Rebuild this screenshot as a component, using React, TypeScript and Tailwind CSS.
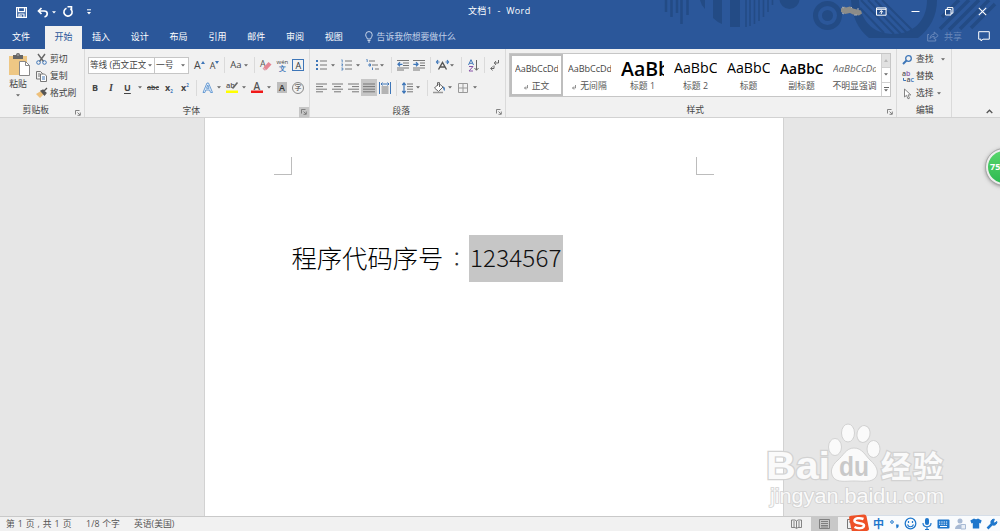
import type { ReactNode } from "react";

type SvgProps = { w: number; h: number; className?: string; children: ReactNode };

const Svg = ({ w, h, className = "", children }: SvgProps) => (
  <svg
    width={w}
    height={h}
    viewBox={`0 0 ${w} ${h}`}
    fill="none"
    className={`shrink-0 overflow-visible ${className}`}
  >
    {children}
  </svg>
);

const Caret = ({ className = "" }: { className?: string }) => (
  <Svg w={4} h={3} className={className}>
    <path d="M0 .3h4L2 2.6z" fill="#666" />
  </Svg>
);

const Sep = ({ className = "" }: { className?: string }) => (
  <div className={`w-px h-4 shrink-0 bg-[#dadada] ${className}`} />
);

const Launcher = () => (
  <Svg w={6} h={6}>
    <path d="M.5 4.5v-4h4M2.5 2.5l2.5 2.5M5.3 2.5v2.8H2.5" stroke="#777" strokeWidth=".9" />
  </Svg>
);

// horizontal text lines, each one given as [x1, x2]
const Lines = ({ rows, className = "" }: { rows: number[][]; className?: string }) => (
  <Svg w={12} h={12} className={className}>
    {rows.map(([a, b], i) => (
      <path key={i} d={`M${a} ${2 + i * 2.6}H${b}`} stroke="#777" strokeWidth="1" />
    ))}
  </Svg>
);

const tabs = ["插入", "设计", "布局", "引用", "邮件", "审阅", "视图"];

const Decoration = () => (
  <svg
    className="absolute right-0 top-0"
    width="360"
    height="49"
    viewBox="0 0 360 49"
    fill="none"
    stroke="#234b85"
  >
    <path d="M26 0v12M31.500 0v17M37 0v13M41.500 0v24M47.500 0v15" strokeWidth="2.500" />
    <path d="M60 0h5v9q-4-4-5-9zM73 0h9v24q-5-2-9-6zM90 0h10v27H90z" fill="#234b85" stroke="none" />
    <path d="M106 0v27M110 0v26M114.500 0v24M119 0v21M123.500 0v17M128 0v12M132.500 0v5" strokeWidth="1.600" />
    <circle cx="149.500" cy="-1" r="10" fill="#234b85" stroke="none" />
    <circle cx="187.500" cy="15.500" r="12" strokeWidth="5" />
    <circle cx="187.500" cy="15.500" r="5.500" fill="#234b85" stroke="none" />
    <path d="M211 0c1 17 7 29 18 38h49c12-9 19-22 19-38h-10c0 21-14 34-34 34S220 20 219 0z" fill="#234b85" stroke="none" />
    <path d="M221 0l33 34M228 0l33 34M235 0l32 33M242 0l31 31M220 8l24 25" strokeWidth="2" />
    <path d="M300 29L329 0M309 30L339 0M320 29L349 0M302 17L319 0M331 28l24-24" strokeWidth="3.500" />
  </svg>
);

const TitleBar = () => (
  <div className="relative flex h-[24px] items-center text-white">
    <Svg w={11} h={11} className="ml-[16px]">
      <path d="M.6.600h9.800v9.800H.6zM2.500.600v4h6V.6M3 10.400V7h5v3.400M5 8v2" stroke="#fff" strokeWidth="1.200" />
    </Svg>
    <Svg w={12} h={11} className="ml-[10px]">
      <path d="M4.500 1L1.500 4l3 3M1.500 4h5.700c4 0 4 5 .3 6" stroke="#fff" strokeWidth="1.700" />
    </Svg>
    <Svg w={4} h={3} className="ml-[3px]">
      <path d="M0 .3h4L2 2.600z" fill="#fff" />
    </Svg>
    <Svg w={12} h={12} className="ml-[6px]">
      <path d="M4.500 2.200A4.100 4.100 0 1 0 8.300 2.600M5.500.800h4v4" stroke="#fff" strokeWidth="1.600" />
    </Svg>
    <Svg w={6} h={6} className="ml-[12px]">
      <path d="M1 .8h4" stroke="#fff" />
      <path d="M1 3h4L3 5.500z" fill="#fff" />
    </Svg>
    <span className="ml-[376px] w-[66px] text-[9px] leading-none tracking-[.35px] whitespace-pre pb-[4px]">
      文档1  -  Word
    </span>
    <Svg w={22} h={11} className="ml-[306px] mb-[2px]">
      <path d="M1 2.500l3-2 2 1 4-1 3 2 4 1 4 1 1 3-3 2-6-1-3-1.500-5 1-4-2z" fill="#8d8c88" />
      <path d="M2 1l2 1M11 1l1 1M2 7l2 1M17 3h2M14 9h3" stroke="#a8aeb8" />
    </Svg>
    <Svg w={11} h={9} className="ml-[14px] mb-[2px]">
      <path d="M.5.900h9.600v7.300H.5zM.5 2.300h9.600M5.300 7V3.800M3.500 5.300l1.800-1.700 1.800 1.700" stroke="#fff" />
    </Svg>
    <Svg w={9} h={9} className="ml-[24px] mb-[2px]">
      <path d="M.5 4.500h8" stroke="#fff" />
    </Svg>
    <Svg w={9} h={9} className="ml-[25px] mb-[2px]">
      <path d="M.5 2.500h5.500v5.500H.5zM2.300 2.300V.6h5.600v5.600H6" stroke="#fff" />
    </Svg>
    <Svg w={9} h={9} className="ml-[24px] mb-[2px]">
      <path d="M.8.800l7.400 7.400M8.200.800L.8 8.200" stroke="#fff" strokeWidth="1.100" />
    </Svg>
  </div>
);

const TabBar = () => (
  <div className="relative flex h-[25px] pt-[2px] text-[9px] leading-none text-white">
    <div className="flex w-[45px] items-center pb-[3px] pl-[12px]">文件</div>
    <div className="flex w-[37px] items-center justify-center bg-[#f1f1f1] pb-[3px] text-[#2b579a]">开始</div>
    <div className="flex pb-[3px] pl-[10px]">
      {tabs.map((tab) => (
        <div key={tab} className="flex w-[38.8px] items-center">
          {tab}
        </div>
      ))}
    </div>
    <div className="flex items-center pb-[1px] text-[8.8px] text-[#c3d1e8]">
      <Svg w={8} h={12} className="mr-[4px] ml-[1px]">
        <path d="M2.300 8C2.300 6.500.7 6 .7 3.800a3.200 3.200 0 0 1 6.500 0C7.200 6 5.700 6.500 5.700 8zM2.500 9.500h3M3 11h2" stroke="#d9e2f0" strokeWidth=".9" />
      </Svg>
      告诉我你想要做什么
    </div>
    <div className="ml-auto flex items-center pr-[10px] pb-[2px] text-[#6a89bb]">
      <Svg w={12} h={11} className="mr-[5px]">
        <path d="M2 3.500H.7v6.500h8V8M3 7.500c.3-3 2-4.200 4.200-4.200V1l4 3.600-4 3.400V5.500C5.500 5.500 4 6 3 7.500z" stroke="#6a89bb" />
      </Svg>
      共享
      <Svg w={12} h={11} className="ml-[16px]">
        <path d="M.7.700h10.600v7.500H5L3 10V8.200H.7z" stroke="#fff" />
      </Svg>
    </div>
  </div>
);

const Clipboard = () => (
  <section className="flex w-[85px] flex-col border-r border-[#dadada]">
    <div className="flex h-[53px]">
      <div className="flex w-[36px] flex-col items-center pt-[4px]">
        <Svg w={22} h={23} className="ml-[3px]">
          <path d="M0 3h18v19H0z" fill="#eec784" />
          <path d="M4 2h3a2 2 0 0 1 4 0h3v4H4z" fill="#666" />
          <path d="M8.500 2h1" stroke="#fff" />
          <path d="M10.500 8.500h6l4 4v10h-10z" fill="#fff" stroke="#888" />
          <path d="M16.500 8.500v4h4" stroke="#888" />
        </Svg>
        <span className="mt-[4px]">粘贴</span>
        <Caret className="mt-[5px]" />
      </div>
      <div className="flex flex-col pt-[2px]">
        <div className="flex h-[17px] shrink-0 items-center">
          <Svg w={11} h={11} className="mr-[3px]">
            <path d="M2 0l5.500 7.500M9 0L3.500 7.500" stroke="#666" strokeWidth="1.400" />
            <circle cx="2.500" cy="8.500" r="1.800" stroke="#3e76b8" />
            <circle cx="8.500" cy="8.500" r="1.800" stroke="#3e76b8" />
          </Svg>
          剪切
        </div>
        <div className="flex h-[17px] shrink-0 items-center">
          <Svg w={11} h={11} className="mr-[3px]">
            <path d="M.5.500h4l2 2V8h-6zM2 3h2M2 5h2" stroke="#777" />
            <path d="M4.500 3h4l2 2v5.500h-6z" fill="#fff" stroke="#777" />
            <path d="M6 6h3M6 8h3" stroke="#3e76b8" />
          </Svg>
          复制
        </div>
        <div className="flex h-[17px] shrink-0 items-center">
          <Svg w={12} h={11} className="mr-[2px]">
            <path d="M5 3L0 6l4 4 4-4z" fill="#eec07a" />
            <path d="M5 3l2-1 3 3-1.500 2zM8 3l3-3" fill="#555" stroke="#555" strokeWidth="1.300" />
          </Svg>
          格式刷
        </div>
      </div>
    </div>
    <div className="flex h-[14px] items-center justify-end pr-[3px]">
      <span className="mr-[26px] mt-[3px]">剪贴板</span>
      <div className="mt-[7px]"><Launcher /></div>
    </div>
  </section>
);

const FontGroup = () => (
  <section className="w-[225px] border-r border-[#dadada]">
    <div className="flex h-[22px] items-center pt-[10px] pl-[3px] text-[#444]">
      <div className="flex h-[17px] w-[67px] shrink-0 items-center border border-[#c6c6c6] bg-white pl-px">
        <span className="w-[56px] overflow-hidden whitespace-nowrap text-[8.6px] leading-[14px]">等线 (西文正文</span>
        <Caret className="ml-[2px]" />
      </div>
      <div className="-ml-px flex h-[17px] w-[35px] shrink-0 items-center border border-[#c6c6c6] bg-white pl-px text-[8.8px]">
        <span className="w-[25px]">一号</span>
        <Caret />
      </div>
      <span className="ml-[5px] font-[Open_Sans] text-[10.500px]">A</span>
      <Svg w={4} h={3} className="mb-[6px]"><path d="M2 0l2 3H0z" fill="#3e76b8" /></Svg>
      <span className="ml-[5px] font-[Open_Sans] text-[9px]">A</span>
      <Svg w={4} h={3} className="mb-[6px]"><path d="M0 0h4L2 3z" fill="#3e76b8" /></Svg>
      <Sep className="ml-[5px]" />
      <span className="ml-[5px] w-[15px] font-[Open_Sans] text-[9.5px]">Aa</span>
      <Caret className="-ml-px" />
      <Sep className="ml-[6px]" />
      <Svg w={12} h={12} className="ml-[5px]">
        <text x="0" y="8" fontSize="9" fontFamily="Open Sans" fill="#555">A</text>
        <path d="M3.500 8.500L8.500 3 11.500 5.500 6.500 11z" fill="#e58594" />
        <path d="M3.500 8.500L6.500 11l-2 .5-2-1.700z" fill="#d9a4ad" />
      </Svg>
      <div className="ml-[4px] w-[12px] shrink-0 font-[Open_Sans]">
        <div className="text-center text-[6px] leading-[6px]">wén</div>
        <div className="text-center text-[7px] leading-[7px] font-bold text-[#3e76b8]">文</div>
      </div>
      <div className="ml-[4px] flex h-[12px] w-[12px] items-center justify-center border border-[#3e76b8] font-[Open_Sans] text-[9px] text-[#333]">A</div>
    </div>
    <div className="mt-[8px] flex h-[17px] items-center pl-[7px] text-[#444]">
      <b className="w-[17px] font-[Open_Sans] text-[9px]">B</b>
      <i className="w-[15px] font-[Liberation_Serif] text-[10px] font-bold">I</i>
      <span className="w-[14px] font-[Open_Sans] text-[9px] font-bold underline underline-offset-2">U</span>
      <Caret />
      <span className="ml-[5px] w-[18px] font-[Open_Sans] text-[7px] font-semibold line-through">abc</span>
      <span className="w-[16px] font-[Open_Sans] text-[9px] font-bold">x<span className="relative top-[2px] text-[4.500px] text-[#3e76b8]">2</span></span>
      <span className="w-[14px] font-[Open_Sans] text-[9px] font-bold">x<span className="relative -top-[4px] text-[4.500px] text-[#3e76b8]">2</span></span>
      <Sep className="ml-px" />
      <Svg w={12} h={12} className="ml-[5px]">
        <path d="M1 10.500L5 1h1.500l4 9.500H8.600L7.600 8H3.800l-.9 2.500zM4.500 6.300h2.600L5.800 3z" stroke="#5b93d0" strokeWidth=".9" fill="#eaf2fa" />
      </Svg>
      <Caret className="ml-[3px]" />
      <Svg w={13} h={13} className="ml-[5px]">
        <text x="0" y="7" fontSize="7.500" fontWeight="600" fontFamily="Open Sans" fill="#555">ab</text>
        <path d="M6.500 7.500l5-6" stroke="#666" strokeWidth="1.600" />
        <path d="M0 9.500h12v2.500H0z" fill="#ff0" />
      </Svg>
      <Caret className="ml-[3px]" />
      <Svg w={13} h={13} className="ml-[5px]">
        <text x="2.500" y="8.500" fontSize="10" fontWeight="600" fontFamily="Open Sans" fill="#555">A</text>
        <path d="M0 9.500h12v2.500H0z" fill="#f01818" />
      </Svg>
      <Caret className="ml-[3px]" />
      <span className="ml-[6px] flex h-[11px] w-[10px] items-center justify-center bg-[#bdbdbd] font-[Open_Sans] text-[9px] font-semibold text-[#333]">A</span>
      <span className="ml-[5px] flex h-[12px] w-[12px] items-center justify-center rounded-full border border-[#888] text-[7px]">字</span>
    </div>
    <div className="flex h-[20px] items-center justify-end">
      <span className="mr-[99px] mt-[10px]">字体</span>
      <div className="mt-[12px] flex h-[11px] w-[10px] items-center justify-center bg-[#c6c6c6]"><Launcher /></div>
    </div>
  </section>
);

const Paragraph = () => (
  <section className="w-[196px] border-r border-[#dadada]">
    <div className="flex h-[22px] items-center pt-[10px] pl-[6px]">
      <Svg w={11} h={12}>
        <path d="M4 2h7M4 6h7M4 10h7" stroke="#777" />
        <path d="M0 1h2v2H0zM0 5h2v2H0zM0 9h2v2H0z" fill="#3e76b8" />
      </Svg>
      <Caret className="ml-[4px]" />
      <Svg w={11} h={12} className="ml-[6px]">
        <path d="M4 2h7M4 6h7M4 10h7" stroke="#777" />
        <path d="M.5.800h.7V3.500M.3 5h1.500l-1 2h1M.3 9h1.500v2H.3" stroke="#3e76b8" strokeWidth=".8" />
      </Svg>
      <Caret className="ml-[4px]" />
      <Svg w={13} h={12} className="ml-[6px]">
        <path d="M3 2h6M6 6h6M9 10h4" stroke="#777" />
        <path d="M.5.500h.7V3M3 5h1.500v2H3zM6.500 8.500V11" stroke="#3e76b8" strokeWidth=".9" />
      </Svg>
      <Caret className="ml-px" />
      <Sep className="ml-[7px]" />
      <Svg w={12} h={12} className="ml-[5px]">
        <path d="M0 1.500h12M6 4h6M6 6.500h6M0 9h12M0 11h7" stroke="#777" />
        <path d="M5.500 5.300H1M3 3.300l-2 2 2 2" stroke="#3e76b8" strokeWidth="1.300" />
      </Svg>
      <Svg w={12} h={12} className="ml-[4px]">
        <path d="M0 1.500h12M7 4h5M7 6.500h5M0 9h12M0 11h7" stroke="#777" />
        <path d="M.3 5.300H5M3 3.300l2 2-2 2" stroke="#3e76b8" strokeWidth="1.300" />
      </Svg>
      <Sep className="ml-[5px]" />
      <Svg w={13} h={12} className="ml-[5px]">
        <path d="M2.500 10.500l4-7 4 7M4 8h5" stroke="#555" strokeWidth="1.400" />
        <path d="M.5 3h3M2 1L.5 3 2 5M12.500 3h-3M11 1l1.500 2L11 5" stroke="#3e76b8" strokeWidth="1.200" />
      </Svg>
      <Caret className="ml-px" />
      <Sep className="ml-[7px]" />
      <Svg w={11} h={13} className="ml-[6px]">
        <path d="M.5 6L3 .7 5.500 6M1.500 4.300h3" stroke="#3e76b8" />
        <path d="M1 7.500h4l-4 4.500h4" stroke="#8955a8" />
        <path d="M8.500 1v10M6.500 9l2 2.300 2-2.300" stroke="#666" />
      </Svg>
      <Sep className="ml-[5px]" />
      <Svg w={10} h={12} className="ml-[5px]">
        <path d="M8.500 1v3h-4M6 2L4.300 4 6 6M4 6.500v3H.8M2.500 7.500L.8 9.500l1.700 2" stroke="#555" strokeWidth=".9" />
      </Svg>
    </div>
    <div className="mt-[8px] flex h-[17px] items-center pl-[6px]">
      <Lines rows={[[0, 11], [0, 7], [0, 11], [0, 7]]} />
      <Lines rows={[[0, 11], [2, 9], [0, 11], [2, 9]]} className="ml-[4px]" />
      <Lines rows={[[0, 11], [4, 11], [0, 11], [4, 11]]} className="ml-[4px]" />
      <div className="ml-px flex h-[17px] w-[16px] items-center justify-center bg-[#c6c6c6]">
        <Lines rows={[[0, 12], [0, 12], [0, 12], [0, 12]]} />
      </div>
      <Svg w={12} h={12} className="ml-[2px]">
        <path d="M.5 0v12M11.500 0v12M2 2h8M3.500.500L2 2l1.500 1.500M8.500.500L10 2 8.500 3.500" stroke="#3e76b8" />
        <path d="M2.500 5h7M2.500 7h7M2.500 9h7M2.500 11h7" stroke="#777" />
      </Svg>
      <Sep className="ml-[5px]" />
      <Svg w={11} h={12} className="ml-[5px]">
        <path d="M2 1v10M.3 3L2 1l1.700 2M.3 9L2 11l1.700-2" stroke="#3e76b8" strokeWidth="1.200" />
        <path d="M5 2h6M5 4.600h6M5 7.200h6M5 9.800h6" stroke="#777" />
      </Svg>
      <Caret className="ml-[3px]" />
      <Sep className="ml-[7px]" />
      <Svg w={13} h={12} className="ml-[5px]">
        <path d="M1.500 6L6 1.500l4 3.500-4.500 4.500zM4.500 4V.6h2V5" stroke="#666" fill="#fff" />
        <path d="M10 4.500c2.500.500 2 3 1.500 4.500C10.500 8 10 7 10 4.500z" fill="#3e76b8" />
        <path d="M0 10.500h10" stroke="#999" strokeWidth="1.500" />
      </Svg>
      <Caret className="ml-[2px]" />
      <Svg w={10} h={10} className="ml-[6px]">
        <path d="M.5.500h9v9h-9zM5 .5v9M.5 5h9" stroke="#999" />
      </Svg>
      <Caret className="ml-[5px]" />
    </div>
    <div className="flex h-[20px] items-center justify-end pr-[3px]">
      <span className="mr-[86px] mt-[10px]">段落</span>
      <div className="mt-[12px]"><Launcher /></div>
    </div>
  </section>
);

const styles = [
  { sample: "AaBbCcDd", name: "正文", mark: true, cls: "text-[9.1px] tracking-[-.05px]" },
  { sample: "AaBbCcDd", name: "无间隔", mark: true, cls: "text-[9.1px] tracking-[-.05px]" },
  { sample: "AaBbC", name: "标题 1", mark: false, cls: "text-[19.5px] font-semibold text-black" },
  { sample: "AaBbCc", name: "标题 2", mark: false, cls: "text-[14.2px] text-black" },
  { sample: "AaBbCc", name: "标题", mark: false, cls: "text-[14.2px] text-black" },
  { sample: "AaBbCc", name: "副标题", mark: false, cls: "text-[13.8px] font-semibold text-black" },
  { sample: "AaBbCcDd", name: "不明显强调", mark: false, cls: "text-[9.8px] italic text-[#666]" },
];

const Styles = () => (
  <section className="flex w-[391px] flex-col border-r border-[#dadada] pt-[4px] pl-[3px]">
    <div className="flex h-[44px] w-[382px] border border-[#c6c6c6] bg-white">
      {styles.map((style, index) => (
        <div
          key={index}
          className={`flex w-[53px] shrink-0 flex-col items-center ${
            index === 0 ? "outline-2 -outline-offset-2 outline-[#bebebe]" : ""
          }`}
        >
          <div className="mt-[4px] flex h-[21px] w-[43px] items-center overflow-hidden">
            <span className={`font-[Open_Sans] leading-none ${style.cls}`}>{style.sample}</span>
          </div>
          <div className="mt-[3px] flex items-center gap-[4px] text-[8.8px] whitespace-nowrap text-[#555]">
            {style.mark && (
              <Svg w={4} h={5} className="mt-[2px]">
                <path d="M3.500 0v3H.5M2 1.500L.5 3 2 4.500" stroke="#777" strokeWidth=".8" />
              </Svg>
            )}
            {style.name}
          </div>
        </div>
      ))}
      <div className="ml-auto flex w-[10px] flex-col border-l border-[#d0d0d0]">
        <div className="flex flex-1 items-center justify-center bg-[#e1e1e1]">
          <Svg w={4} h={3}><path d="M2 0l2 3H0z" fill="#bbb" /></Svg>
        </div>
        <div className="flex flex-1 items-center justify-center border-y border-[#d0d0d0]">
          <Caret />
        </div>
        <div className="flex flex-1 flex-col items-center justify-center gap-px">
          <div className="h-px w-[5px] bg-[#666]" />
          <Caret />
        </div>
      </div>
    </div>
    <div className="flex h-[19px] items-center justify-end pr-[3px]">
      <span className="mr-[183px] mt-[8px]">样式</span>
      <div className="mt-[11px]"><Launcher /></div>
    </div>
  </section>
);

const Editing = () => (
  <section className="flex w-[55px] flex-col border-r border-[#dadada] pt-[2px] pl-[5px]">
    <div className="flex h-[17px] items-center">
      <Svg w={11} h={10} className="mr-[3px]">
        <circle cx="6.500" cy="3.500" r="2.800" stroke="#3e76b8" strokeWidth="1.300" />
        <path d="M4.500 5.500L1 9" stroke="#3e76b8" strokeWidth="1.900" />
      </Svg>
      查找
      <Caret className="ml-[7px]" />
    </div>
    <div className="flex h-[17px] items-center">
      <div className="mr-[2px] flex w-[12px] flex-col font-[Open_Sans] text-[7px] leading-[6px] font-semibold text-[#555]">
        <span>a<span className="text-[#8955a8]">b</span></span>
        <span className="flex items-center justify-end">
          <Svg w={3} h={4}><path d="M.5 0v2.500H3" stroke="#3e76b8" /></Svg>
          a<span className="text-[#3e76b8]">c</span>
        </span>
      </div>
      替换
    </div>
    <div className="flex h-[17px] items-center">
      <Svg w={10} h={12} className="mr-[3px] ml-px">
        <path d="M1.500 1v8l2-1.700 1.500 3.500 1.500-.6-1.500-3.300h2.800z" stroke="#777" strokeWidth=".9" fill="#fff" />
      </Svg>
      选择
      <Caret className="ml-[3px]" />
    </div>
    <div className="mt-[4px] pl-[14px]">编辑</div>
  </section>
);

const Ribbon = () => (
  <div className="flex h-[69px] shrink-0 border-b border-[#d2d2d2] bg-[#f1f1f1] text-[8.8px] leading-none text-[#444]">
    <Clipboard />
    <FontGroup />
    <Paragraph />
    <Styles />
    <Editing />
    <Svg w={7} h={5} className="ml-[34px] mt-[60px]">
      <path d="M.7 4l2.800-2.800L6.300 4" stroke="#555" strokeWidth="1.300" />
    </Svg>
  </div>
);

const Page = () => (
  <div className="ml-[204px] h-full w-[580px] border-x border-[#d2d2d2] bg-white">
    <div className="flex justify-between pt-[39px] pr-[69px] pl-[69px]">
      <div className="h-[18px] w-[18px] border-r border-b border-[#bcbcbc]" />
      <div className="h-[18px] w-[18px] border-b border-l border-[#bcbcbc]" />
    </div>
    <div className="mt-[60px] flex h-[47px] items-center pl-[86.500px] font-['Noto_Sans_CJK_SC'] text-[25.300px] font-light leading-none text-black">
      <span className="pb-[2px]">程序代码序号</span>
      <span className="w-[25.700px] pl-[1px] text-center font-['Noto_Sans_CJK_TC'] text-[20px] text-[#333]">：</span>
      <span className="flex h-[47px] w-[94px] items-center bg-[#c6c6c6] pb-[2px] pl-px text-[24.200px] tracking-[.15px] text-[#111]">1234567</span>
    </div>
  </div>
);

const Watermark = () => (
  <div className="absolute top-[422px] left-[766px] h-[86px] w-[182px]">
    <svg width="182" height="86" viewBox="0 0 182 86" fill="#fafafa" stroke="#d2d2d2" strokeWidth="1">
      <g fontFamily="Liberation Sans" fontWeight="700" paintOrder="stroke" strokeWidth="2.500">
        <text x="0" y="57" fontSize="38" textLength="64" lengthAdjust="spacingAndGlyphs">Bai</text>
        <text x="115" y="55" fontSize="30" textLength="62" fontFamily="Noto Sans CJK SC">经验</text>
        <text x="4" y="81" fontSize="20" textLength="174" lengthAdjust="spacingAndGlyphs" fontWeight="400" strokeWidth="1.600">jingyan.baidu.com</text>
      </g>
      <ellipse cx="69" cy="25" rx="6.500" ry="8.500" />
      <ellipse cx="82" cy="11" rx="6.500" ry="9" />
      <ellipse cx="97.500" cy="12" rx="6.500" ry="8.500" transform="rotate(12 97.500 12)" />
      <ellipse cx="107.500" cy="27" rx="6.500" ry="8.500" />
      <path d="M88 26c8 0 11 7 16 12 7 6 9 12 6 17-4 6-14 4-22 4s-17 2-21-4c-3-5-2-11 5-17 5-4 8-12 16-12z" />
      <text x="73" y="54" fontSize="27" fontWeight="700" textLength="30" lengthAdjust="spacingAndGlyphs" fontFamily="Liberation Sans" fill="#c9c9c9" stroke="none">du</text>
    </svg>
  </div>
);

const InputBar = () => (
  <div className="absolute right-0 bottom-0 flex h-[16px] w-[147px] items-center border-t border-[#d6dee8] bg-[#f9fbfd] text-[#1f77cc]">
    <Svg w={22} h={18} className="-ml-[5px] -mt-[2px]">
      <path d="M1 3.500Q1 2 3 1.700L16 .5q2 0 2.500 2L21 15q0 1.500-2 2l-13 1q-2 0-2.500-2z" fill="#ee5127" />
      <path d="M15.500 5C12 3.500 6 4 6.500 7s9.500 1.500 9.500 4.500-6 3.500-9.500 1.500" stroke="#fff" strokeWidth="2.500" />
    </Svg>
    <span className="ml-[3px] text-[11px] leading-none font-bold">中</span>
    <Svg w={10} h={10} className="ml-[6px]">
      <circle cx="2" cy="3" r="1.300" stroke="#1f77cc" />
      <path d="M6 5.500h2.500c.5 2 0 3.300-2 4" fill="#1f77cc" />
    </Svg>
    <Svg w={13} h={13} className="ml-[4px]">
      <circle cx="6.500" cy="6.500" r="5.300" stroke="#1f77cc" strokeWidth="1.300" />
      <path d="M4.500 4v2M8.500 4v2M3.500 7.500c1 3 5 3 6 0" stroke="#1f77cc" strokeWidth="1.200" />
    </Svg>
    <Svg w={10} h={12} className="ml-[5px]">
      <rect x="3" y="0" width="4" height="7" rx="2" fill="#1f77cc" />
      <path d="M1 5c0 5 8 5 8 0M5 8.500v3M3 11.500h4" stroke="#1f77cc" strokeWidth="1.200" />
    </Svg>
    <Svg w={13} h={10} className="ml-[5px]">
      <rect x=".5" y=".5" width="12" height="9" rx="1" fill="#1f77cc" />
      <path d="M2 3h9M2 5.200h9" stroke="#fff" strokeDasharray="1.300 1" />
      <path d="M3 7.500h7" stroke="#fff" />
    </Svg>
    <Svg w={11} h={12} className="ml-[5px]">
      <circle cx="5" cy="3" r="2.500" fill="#a8bad4" />
      <path d="M0 11c0-6 10-6 10 0z" fill="#a8bad4" />
      <path d="M6 6.500h4.500V11H6z" fill="#e8eef6" stroke="#a8bad4" />
    </Svg>
    <Svg w={12} h={11} className="ml-[4px]">
      <path d="M4 .5Q6 2 8 .5L11.700 2.500 10.500 5.500 9.200 5v5.500H2.800V5l-1.300.5L.3 2.500z" fill="#1f77cc" />
    </Svg>
    <Svg w={12} h={12} className="ml-[4px]">
      <path d="M1.500 10.500L7 5" stroke="#1f77cc" strokeWidth="2.500" />
      <path d="M10.800 3.500A3 3 0 1 1 8.300 1.200L7.500 4l1.200 1z" fill="#1f77cc" stroke="#1f77cc" />
    </Svg>
  </div>
);

const StatusBar = () => (
  <div className="relative flex h-[15px] shrink-0 items-center border-t border-[#c9c9c9] bg-[#f1f1f1] text-[8.800px] leading-none whitespace-pre text-[#555]">
    <span className="ml-[6px] w-[80px] tracking-[.35px]">第 1 页 , 共 1 页</span>
    <span className="w-[48px] tracking-[.15px]">1/8 个字</span>
    <span className="w-[657px]">英语(美国)</span>
    <Svg w={11} h={10}>
      <path d="M.5 1h3.500l1.500 1L7 1h3.500v7.500H7l-1.500 1L4 8.500H.5zM5.500 2v7M2 3h2M2 5h2M2 7h2M7 3h2M7 5h2M7 7h2" stroke="#777" strokeWidth=".9" />
    </Svg>
    <div className="ml-[9px] flex h-full w-[27px] items-center justify-center bg-[#c8c8c8]">
      <Svg w={11} h={10}>
        <path d="M.5.500h10v9H.5zM2 2.500h7M2 4.500h7M2 6.500h7M2 8h7" stroke="#777" strokeWidth=".9" />
      </Svg>
    </div>
    <Svg w={11} h={10} className="ml-[9px]">
      <path d="M.5.500h10v9H.5zM2 3h7" stroke="#777" />
    </Svg>
    <InputBar />
  </div>
);

const App = () => {
  return (
    <div className="relative flex h-[531px] w-[1000px] flex-col overflow-hidden bg-[#e6e6e6] font-['Open_Sans','Noto_Sans_CJK_SC',sans-serif]">
      <header className="relative h-[49px] shrink-0 bg-[#2b579a]">
        <Decoration />
        <TitleBar />
        <TabBar />
      </header>
      <Ribbon />
      <main className="min-h-0 flex-1">
        <Page />
      </main>
      <StatusBar />
      <Watermark />
      <div className="absolute top-[149px] left-[986px] flex h-[36px] w-[36px] items-center rounded-full border-2 border-[#eee] bg-linear-to-b from-[#58d66c] to-[#2bb951] pl-[2px] text-[9px] font-bold text-white shadow-[0_1px_4px_#777] outline outline-[#aaa]">
        75%
      </div>
    </div>
  );
};

export default App;
